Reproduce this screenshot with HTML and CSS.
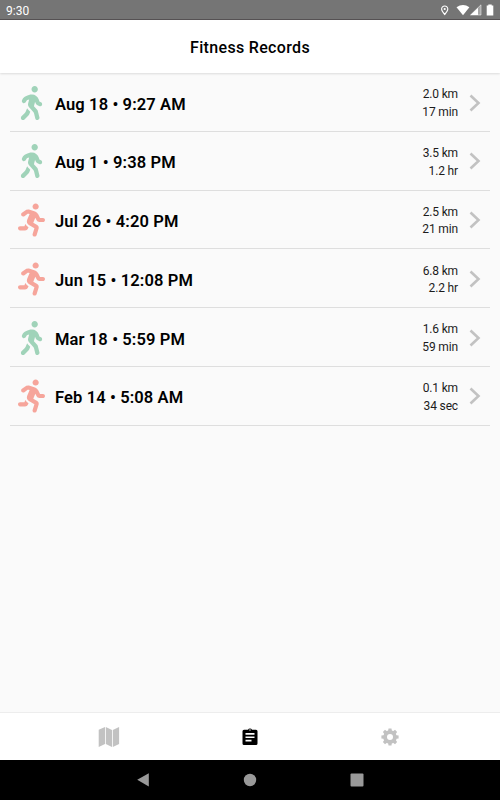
FILE: index.html
```html
<!DOCTYPE html>
<html lang="en">
<head>
<meta charset="utf-8">
<title>Fitness Records</title>
<link rel="stylesheet" href="styles.css">
</head>
<body>
<svg class="defs" aria-hidden="true">
  <symbol id="walk" viewBox="0 0 320 512"><path d="M208 96c26.500 0 48-21.500 48-48S234.500 0 208 0s-48 21.500-48 48 21.500 48 48 48zm94.500 149.100l-23.300-11.800-9.700-29.400c-14.700-44.600-55.700-75.800-102.200-75.900-36-.1-55.900 10.100-93.300 25.200-21.600 8.700-39.300 25.200-49.700 46.200L17.600 213c-7.800 15.800-1.500 35 14.200 42.900 15.600 7.900 34.600 1.500 42.500-14.300L81 228c3.500-7 9.300-12.500 16.500-15.400l26.800-10.800-15.200 60.700c-5.200 20.800.4 42.900 14.900 58.800l59.900 65.400c7.200 7.900 12.300 17.400 14.900 27.700l18.300 73.300c4.300 17.100 21.700 27.600 38.800 23.300 17.100-4.300 27.600-21.700 23.300-38.800l-22.200-89c-2.600-10.300-7.700-19.900-14.900-27.700l-45.500-49.700 17.200-68.700 5.500 16.500c5.300 16.100 16.700 29.400 31.700 37l23.300 11.800c15.600 7.900 34.600 1.500 42.500-14.300 7.700-15.700 1.400-35.100-14.300-43zM73.600 385.800c-3.200 8.100-8 15.400-14.200 21.500l-50 50.100c-12.500 12.500-12.500 32.800 0 45.300s32.700 12.500 45.200 0l59.400-59.400c6.100-6.100 10.900-13.400 14.200-21.500l13.500-33.800c-55.300-60.300-38.700-41.800-47.400-53.700l-20.700 51.500z"/></symbol>
  <symbol id="run" viewBox="0 0 416 512"><path d="M272 96c26.510 0 48-21.490 48-48S298.510 0 272 0s-48 21.490-48 48 21.490 48 48 48zM113.690 317.470l-14.800 34.520H32c-17.670 0-32 14.330-32 32s14.330 32 32 32h77.450c19.250 0 36.580-11.440 44.110-29.090l8.790-20.520-10.670-6.300c-17.320-10.230-30.060-25.370-37.990-42.610zM384 223.990h-44.030l-26.060-53.250c-12.500-25.550-35.450-44.230-61.780-50.940l-71.080-21.140c-28.300-6.800-57.770-.55-80.840 17.140l-39.670 30.410c-14.030 10.750-16.690 30.830-5.940 44.860s30.840 16.690 44.860 5.940l39.660-30.410c7.670-5.890 17.440-8 25.270-6.140l14.700 4.370-37.460 87.390c-12.620 29.480-1.310 64.010 26.300 80.310l84.980 50.170-27.470 87.730c-5.280 16.860 4.110 34.820 20.970 40.090 3.190 1 6.410 1.480 9.580 1.480 13.610 0 26.230-8.770 30.520-22.450l31.640-101.060c5.910-20.770-2.890-43.080-21.640-54.390l-61.240-36.140 31.310-78.280 20.270 41.430c8 16.340 24.920 26.890 43.110 26.890H384c17.670 0 32-14.330 32-32s-14.330-31.990-32-31.990z"/></symbol>
  <symbol id="chevron" viewBox="0 0 12 18"><path d="M1.500 1.500L9.500 9L1.500 16.500" fill="none" stroke="currentColor" stroke-width="2.600"/></symbol>
</svg>

<div class="status">
  <span class="time">9:30</span>
  <svg class="status-icons" viewBox="0 0 60 20">
    <path d="M4.700 6a3.100 3.100 0 0 1 3.100 3.100c0 2.100-3.100 5.400-3.100 5.400S1.600 11.200 1.600 9.100A3.100 3.100 0 0 1 4.700 6z" fill="none" stroke="#fff" stroke-width="1.100"/>
    <circle cx="4.700" cy="9" r="1.100" fill="#fff"/>
    <path d="M16.500 7.300Q23 2.800 29.400 7.300L23 15.200z" fill="#fff"/>
    <path d="M30.500 15L41 4.800V15z" fill="#fff" fill-opacity=".35"/>
    <path d="M30.500 15L38 7.700V15z" fill="#fff"/>
    <path d="M30.500 15L41 4.800V15z" fill="none" stroke="#fff" stroke-width=".5"/>
    <path d="M48.300 4.400h3.400v1.200h1.600v10h-6.600v-10h1.600z" fill="#fff"/>
  </svg>
</div>

<header class="header">Fitness Records</header>

<main class="list">
  <div class="row"><svg class="activity walk"><use href="#walk"/></svg><span class="date">Aug 18 • 9:27 AM</span><span class="stats">2.0 km<br>17 min</span><svg class="chevron"><use href="#chevron"/></svg></div>
  <div class="row"><svg class="activity walk"><use href="#walk"/></svg><span class="date">Aug 1 • 9:38 PM</span><span class="stats">3.5 km<br>1.2 hr</span><svg class="chevron"><use href="#chevron"/></svg></div>
  <div class="row"><svg class="activity run"><use href="#run"/></svg><span class="date">Jul 26 • 4:20 PM</span><span class="stats">2.5 km<br>21 min</span><svg class="chevron"><use href="#chevron"/></svg></div>
  <div class="row"><svg class="activity run"><use href="#run"/></svg><span class="date">Jun 15 • 12:08 PM</span><span class="stats">6.8 km<br>2.2 hr</span><svg class="chevron"><use href="#chevron"/></svg></div>
  <div class="row"><svg class="activity walk"><use href="#walk"/></svg><span class="date">Mar 18 • 5:59 PM</span><span class="stats">1.6 km<br>59 min</span><svg class="chevron"><use href="#chevron"/></svg></div>
  <div class="row"><svg class="activity run"><use href="#run"/></svg><span class="date">Feb 14 • 5:08 AM</span><span class="stats">0.1 km<br>34 sec</span><svg class="chevron"><use href="#chevron"/></svg></div>
</main>

<nav class="tabs">
  <svg class="tab" viewBox="0 0 24 24"><path d="M1.700 4.800L8 2V19L1.700 22zM8.800 2L15 4.900V22L8.800 19zM15.800 4.900L22.100 2V19L15.800 22z"/></svg>
  <svg class="tab active" viewBox="0 0 24 24"><path fill-rule="evenodd" d="M6 4.700h4a2.200 2.200 0 0 1 4 0h4a1.500 1.500 0 0 1 1.500 1.500v12.300a1.500 1.500 0 0 1-1.500 1.500H6a1.500 1.500 0 0 1-1.500-1.500V6.200A1.500 1.500 0 0 1 6 4.700zM12 4.300a.7.7 0 1 0 0 1.400a.7.7 0 1 0 0-1.400zM7.500 8v1.700h9V8zM7.500 11.400v1.700h9v-1.700zM7.500 14.800v1.700h6v-1.700z"/></svg>
  <svg class="tab" viewBox="0 0 24 24"><g fill="currentColor"><path id="tooth" d="M10.500 3.400h3l.6 4h-4.200z"/><use href="#tooth" transform="rotate(45 12 12)"/><use href="#tooth" transform="rotate(90 12 12)"/><use href="#tooth" transform="rotate(135 12 12)"/><use href="#tooth" transform="rotate(180 12 12)"/><use href="#tooth" transform="rotate(225 12 12)"/><use href="#tooth" transform="rotate(270 12 12)"/><use href="#tooth" transform="rotate(315 12 12)"/></g><circle cx="12" cy="12" r="4.900" fill="none" stroke="currentColor" stroke-width="3.800"/></svg>
</nav>

<div class="system">
  <svg viewBox="0 0 16 16"><path d="M2.200 7.800L13.800 1.200V14.500z"/></svg>
  <svg viewBox="0 0 16 16"><circle cx="8" cy="8" r="6.200"/></svg>
  <svg viewBox="0 0 16 16"><rect x="1.500" y="1.500" width="13" height="13" rx="1"/></svg>
</div>
</body>
</html>
```
FILE: styles.css
```css
* {
  box-sizing: border-box;
}

body {
  margin: 0;
  height: 800px;
  display: flex;
  flex-direction: column;
  overflow: hidden;
  background: #fafafa;
  color: #000;
  font-family: Roboto, "Liberation Sans", sans-serif;
}

svg {
  display: block;
  fill: currentColor;
}

.defs {
  display: none;
}

.status {
  height: 20px;
  flex: none;
  display: flex;
  justify-content: space-between;
  align-items: center;
  padding-left: 6px;
  background: #757575;
  border-bottom: 1px solid #565254;
  color: #fff;
  font-size: 12px;
}

.time {
  padding-top: 2px;
}

.status-icons {
  width: 60px;
  height: 20px;
  margin-bottom: -1px;
}

.header {
  height: 53px;
  flex: none;
  display: flex;
  align-items: center;
  justify-content: center;
  padding-top: 2px;
  background: #fff;
  box-shadow: 0 1px 2px rgba(0, 0, 0, .12);
  font-size: 16px;
  font-weight: 500;
  letter-spacing: .33px;
}

.list {
  flex: 1;
  padding: 0 10px;
}

.row {
  height: 58.75px;
  display: flex;
  align-items: center;
  padding: 1.500px 9px 0 8px;
  border-bottom: 1px solid #dedede;
}

.activity {
  width: 27px;
  height: 34px;
  margin-right: 10px;
}

.walk {
  color: #a0d3b9;
}

.run {
  color: #f6a59b;
}

.date {
  flex: 1;
  padding-top: 3px;
  font-size: 16.5px;
  font-weight: 600;
  letter-spacing: .12px;
}

.stats {
  padding-top: 2.500px;
  font-size: 12px;
  line-height: 17.6px;
  letter-spacing: -.15px;
  color: #1c1c1c;
  text-align: right;
}

.chevron {
  width: 12px;
  height: 18px;
  margin-left: 11px;
  color: #c2c2c2;
}

.tabs {
  height: 48px;
  flex: none;
  display: flex;
  align-items: center;
  justify-content: space-between;
  padding: 0 98px 0 97px;
  background: #fff;
  border-top: 1px solid #ededed;
}

.tab {
  width: 24px;
  height: 24px;
  color: #c2c2c2;
}

.tab.active {
  color: #000;
}

.system {
  height: 40px;
  flex: none;
  display: flex;
  align-items: center;
  justify-content: space-between;
  padding: 0 135.500px 0 134.500px;
  background: #000;
  color: #999;
}

.system svg {
  width: 16px;
  height: 16px;
}
```
